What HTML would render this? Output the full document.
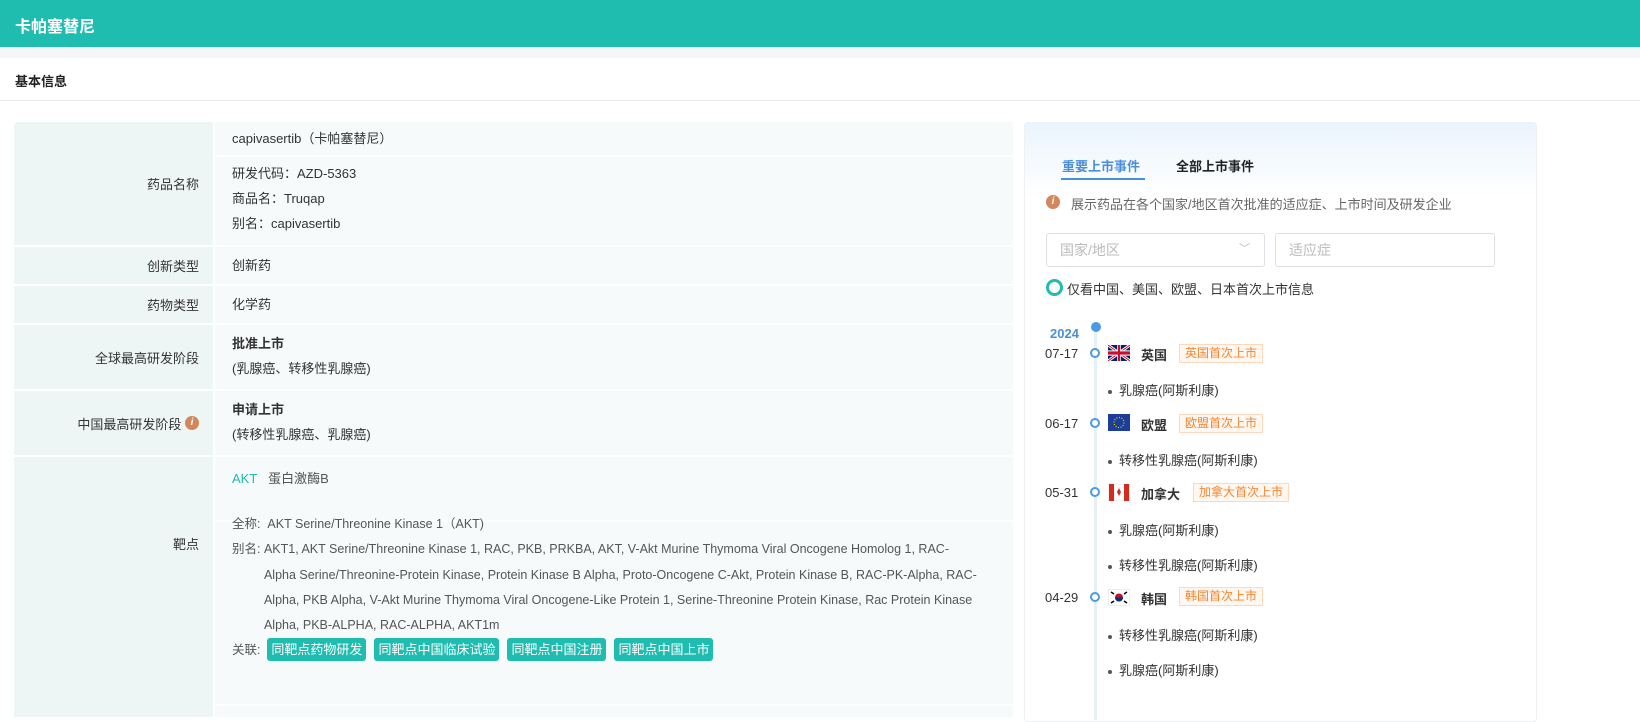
<!DOCTYPE html>
<html><head><meta charset="utf-8"><style>
*{margin:0;padding:0;box-sizing:border-box}
body{width:1640px;height:717px;overflow:hidden;background:#fff;font-family:"Liberation Sans","Noto Sans CJK SC",sans-serif;font-size:13px;color:#333;position:relative}
.a{position:absolute}
.lab{background:#eef6f5;text-align:right;padding-right:14px;display:flex;align-items:center;justify-content:flex-end;color:#333}
.val{background:#f7fafa;padding-left:17px}
.b{font-weight:bold}
.tag{position:absolute;border:1px solid #fcd9bd;background:#fff7f0;color:#f7862f;font-size:12px;padding:0 5px;height:19px;line-height:17px}
.dot{position:absolute;width:10px;height:10px;border:2.5px solid #4a9ae6;border-radius:50%;background:#fff}
.li{position:absolute;font-size:13px;color:#333}
.li:before{content:"";display:inline-block;width:4px;height:4px;background:#555;border-radius:50%;margin-right:7px;vertical-align:middle}
.btn{display:inline-block;background:#1fbcb0;color:#fff;border-radius:3px;padding:0 4px;height:23px;line-height:23px;margin-right:8px;font-size:13px}
</style></head><body>
<div class="a" style="left:0;top:0;width:1640px;height:47px;background:#1fbcb0"></div>
<div class="a b" style="left:15px;top:13px;color:#fff;font-size:16px">卡帕塞替尼</div>
<div class="a" style="left:0;top:47px;width:1640px;height:11px;background:#f4f6f8"></div>
<div class="a b" style="left:15px;top:71px;font-size:13px;color:#222">基本信息</div>
<div class="a" style="left:0;top:100px;width:1640px;height:1px;background:#e6e8ea"></div>

<div class="a lab" style="left:14px;top:122px;width:199px;height:123px;border-radius:4px 0 0 0">药品名称</div>
<div class="a val" style="left:215px;top:122px;width:798px;height:33px;line-height:33px">capivasertib（卡帕塞替尼）</div>
<div class="a val" style="left:215px;top:157px;width:798px;height:88px;padding-top:4px;line-height:25px">研发代码：AZD-5363<br>商品名：Truqap<br>别名：capivasertib</div>

<div class="a lab" style="left:14px;top:247px;width:199px;height:37px">创新类型</div>
<div class="a val" style="left:215px;top:247px;width:798px;height:37px;line-height:37px">创新药</div>
<div class="a lab" style="left:14px;top:286px;width:199px;height:37px">药物类型</div>
<div class="a val" style="left:215px;top:286px;width:798px;height:37px;line-height:37px">化学药</div>
<div class="a lab" style="left:14px;top:325px;width:199px;height:64px">全球最高研发阶段</div>
<div class="a val" style="left:215px;top:325px;width:798px;height:64px;padding-top:6px;line-height:25px"><span class="b">批准上市</span><br>(乳腺癌、转移性乳腺癌)</div>
<div class="a lab" style="left:14px;top:391px;width:199px;height:64px">中国最高研发阶段&nbsp;<span style="display:inline-block;width:14px;height:14px;border-radius:50%;background:#d2885c;color:#fff;font-size:10px;line-height:14px;text-align:center;font-style:italic;font-weight:bold">i</span></div>
<div class="a val" style="left:215px;top:391px;width:798px;height:64px;padding-top:6px;line-height:25px"><span class="b">申请上市</span><br>(转移性乳腺癌、乳腺癌)</div>
<div class="a lab" style="left:14px;top:457px;width:199px;height:260px;padding-bottom:88px">靶点</div>
<div class="a val" style="left:215px;top:457px;width:798px;height:63px;line-height:43px"><span style="color:#1fbcb0">AKT</span>&nbsp;&nbsp; <span style="color:#555">蛋白激酶B</span></div>
<div class="a val" style="left:215px;top:522px;width:798px;height:182px;color:#555;font-size:12.5px;line-height:25.3px">
<div style="position:absolute;left:17px;top:-10px;width:745px">
<div>全称:&nbsp; AKT Serine/Threonine Kinase 1（AKT)</div>
<div style="display:flex"><span style="flex:none">别名:&nbsp;</span><span>AKT1, AKT Serine/Threonine Kinase 1, RAC, PKB, PRKBA, AKT, V-Akt Murine Thymoma Viral Oncogene Homolog 1, RAC-Alpha Serine/Threonine-Protein Kinase, Protein Kinase B Alpha, Proto-Oncogene C-Akt, Protein Kinase B, RAC-PK-Alpha, RAC-Alpha, PKB Alpha, V-Akt Murine Thymoma Viral Oncogene-Like Protein 1, Serine-Threonine Protein Kinase, Rac Protein Kinase Alpha, PKB-ALPHA, RAC-ALPHA, AKT1m</span></div>
<div>关联:&nbsp; <span class="btn">同靶点药物研发</span><span class="btn">同靶点中国临床试验</span><span class="btn">同靶点中国注册</span><span class="btn">同靶点中国上市</span></div>
</div></div>
<div class="a" style="left:215px;top:704px;width:798px;height:13px;background:#f7fafa;border-top:2px solid #fff"></div>

<div class="a" style="left:1024px;top:122px;width:513px;height:600px;border:1px solid #eef0f2;border-radius:4px;background:linear-gradient(#eaf4fd,#fff 75px)"></div>
<div class="a b" style="left:1062px;top:156px;color:#4a90d9">重要上市事件</div>
<div class="a" style="left:1061px;top:178px;width:84px;height:2px;background:#4a90d9"></div>
<div class="a b" style="left:1176px;top:156px;color:#222">全部上市事件</div>
<div class="a" style="left:1046px;top:195px;width:14px;height:14px;border-radius:50%;background:#d2885c;color:#fff;font-size:10px;line-height:14px;text-align:center;font-style:italic;font-weight:bold">i</div>
<div class="a" style="left:1071px;top:194px;color:#666">展示药品在各个国家/地区首次批准的适应症、上市时间及研发企业</div>
<div class="a" style="left:1046px;top:233px;width:219px;height:34px;border:1px solid #dcdfe6;border-radius:3px;background:#fff;color:#bbb;font-size:14px;line-height:32px;padding-left:13px">国家/地区<span style="position:absolute;right:14px;top:-1px;color:#bbb;font-size:11px">﹀</span></div>
<div class="a" style="left:1275px;top:233px;width:220px;height:34px;border:1px solid #dcdfe6;border-radius:3px;background:#fff;color:#bbb;font-size:14px;line-height:32px;padding-left:13px">适应症</div>
<div class="a" style="left:1046px;top:279px;width:17px;height:17px;border:3px solid #1fbcb0;border-radius:50%"></div>
<div class="a" style="left:1067px;top:279px;color:#333">仅看中国、美国、欧盟、日本首次上市信息</div>

<div class="a" style="left:1094px;top:330px;width:3px;height:390px;background:#e6eef8"></div>
<div class="a" style="left:1091px;top:322px;width:10px;height:10px;border-radius:50%;background:#4a9ae6"></div>
<div class="a b" style="left:1050px;top:326px;color:#4a90d9;font-size:13px">2024</div>

<div class="a" style="left:1045px;top:346px">07-17</div>
<div class="dot" style="left:1090px;top:348px"></div>
<svg class="a" style="left:1108px;top:345px" width="22" height="16" viewBox="0 0 60 30" preserveAspectRatio="none"><rect width="60" height="30" fill="#012169"/><path d="M0 0L60 30M60 0L0 30" stroke="#fff" stroke-width="6"/><path d="M0 0L60 30M60 0L0 30" stroke="#c8102e" stroke-width="2"/><path d="M30 0V30M0 15H60" stroke="#fff" stroke-width="10"/><path d="M30 0V30M0 15H60" stroke="#c8102e" stroke-width="6"/></svg>
<div class="a b" style="left:1141px;top:345px">英国</div>
<div class="tag" style="left:1179px;top:344px">英国首次上市</div>
<div class="li" style="left:1108px;top:380px">乳腺癌(阿斯利康)</div>

<div class="a" style="left:1045px;top:416px">06-17</div>
<div class="dot" style="left:1090px;top:418px"></div>
<svg class="a" style="left:1108px;top:414px" width="22" height="17"><rect width="22" height="17" fill="#1a3e9a"/><circle cx="11" cy="8.5" r="5" fill="none" stroke="#fc0" stroke-width="1.2" stroke-dasharray="1 1.6"/></svg>
<div class="a b" style="left:1141px;top:415px">欧盟</div>
<div class="tag" style="left:1179px;top:414px">欧盟首次上市</div>
<div class="li" style="left:1108px;top:450px">转移性乳腺癌(阿斯利康)</div>

<div class="a" style="left:1045px;top:485px">05-31</div>
<div class="dot" style="left:1090px;top:487px"></div>
<svg class="a" style="left:1108px;top:484px" width="22" height="17"><rect width="22" height="17" fill="#fff" stroke="#ddd"/><rect x="1" width="5" height="17" fill="#d52b1e"/><rect x="16" width="5" height="17" fill="#d52b1e"/><path d="M11 4l2 4 -2 4 -2-4z" fill="#d52b1e"/></svg>
<div class="a b" style="left:1141px;top:484px">加拿大</div>
<div class="tag" style="left:1193px;top:483px">加拿大首次上市</div>
<div class="li" style="left:1108px;top:520px">乳腺癌(阿斯利康)</div>
<div class="li" style="left:1108px;top:555px">转移性乳腺癌(阿斯利康)</div>

<div class="a" style="left:1045px;top:590px">04-29</div>
<div class="dot" style="left:1090px;top:592px"></div>
<svg class="a" style="left:1108px;top:589px" width="22" height="17"><rect width="22" height="17" fill="#fff" stroke="#ddd"/><circle cx="11" cy="8.5" r="4" fill="#c60c30"/><path d="M7 8.5a4 4 0 0 0 8 0z" fill="#003478"/><path d="M3 3l3 2M16 5l3-2M3 14l3-2M16 12l3 2" stroke="#000" stroke-width="1.5"/></svg>
<div class="a b" style="left:1141px;top:589px">韩国</div>
<div class="tag" style="left:1179px;top:587px">韩国首次上市</div>
<div class="li" style="left:1108px;top:625px">转移性乳腺癌(阿斯利康)</div>
<div class="li" style="left:1108px;top:660px">乳腺癌(阿斯利康)</div>
</body></html>
